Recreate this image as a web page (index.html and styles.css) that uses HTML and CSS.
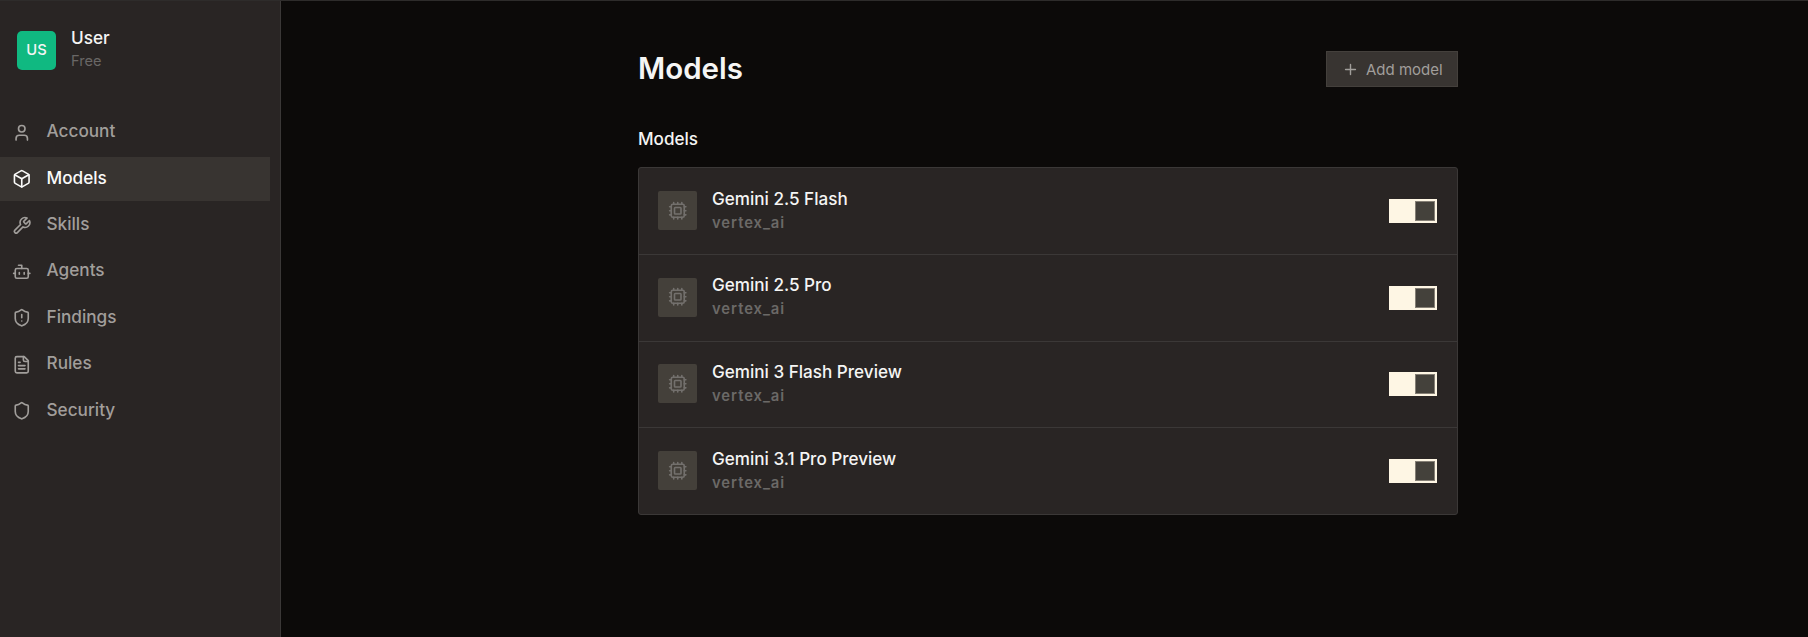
FILE: index.html
```
<!DOCTYPE html>
<html lang="en">
<head>
<meta charset="UTF-8">
<meta name="viewport" content="width=device-width, initial-scale=1.0">
<title>Models</title>
<link rel="stylesheet" href="styles.css">
</head>
<body>

<!-- Shared icon used by every model row -->
<svg class="sprite" width="0" height="0">
    <symbol id="cpu" viewBox="0 0 24 24">
        <rect x="4" y="4" width="16" height="16" rx="2"/>
        <rect x="8" y="8" width="8" height="8" rx="1"/>
        <path d="M12 20v2M12 2v2M17 20v2M17 2v2M2 12h2M2 17h2M2 7h2M20 12h2M20 17h2M20 7h2M7 20v2M7 2v2"/>
    </symbol>
</svg>

<div class="app">
    <aside class="sidebar">
        <div class="profile">
            <div class="avatar">US</div>
            <div class="profile-text">
                <div class="profile-name">User</div>
                <div class="profile-plan">Free</div>
            </div>
        </div>

        <nav class="nav">
            <a class="nav-item">
                <svg class="icon" viewBox="0 0 24 24"><path d="M19 21v-2a4 4 0 0 0-4-4H9a4 4 0 0 0-4 4v2"/><circle cx="12" cy="7" r="4"/></svg>
                <span>Account</span>
            </a>
            <a class="nav-item active">
                <svg class="icon" viewBox="0 0 24 24"><path d="M21 8a2 2 0 0 0-1-1.73l-7-4a2 2 0 0 0-2 0l-7 4A2 2 0 0 0 3 8v8a2 2 0 0 0 1 1.73l7 4a2 2 0 0 0 2 0l7-4A2 2 0 0 0 21 16Z"/><path d="m3.3 7 8.7 5 8.7-5"/><path d="M12 22V12"/></svg>
                <span>Models</span>
            </a>
            <a class="nav-item">
                <svg class="icon" viewBox="0 0 24 24"><path d="M14.7 6.3a1 1 0 0 0 0 1.4l1.6 1.6a1 1 0 0 0 1.4 0l3.77-3.77a6 6 0 0 1-7.94 7.94l-6.91 6.91a2.12 2.12 0 0 1-3-3l6.91-6.91a6 6 0 0 1 7.94-7.94l-3.76 3.76z"/></svg>
                <span>Skills</span>
            </a>
            <a class="nav-item">
                <svg class="icon" viewBox="0 0 24 24"><path d="M12 8V4H8"/><rect x="4" y="8" width="16" height="12" rx="2"/><path d="M2 14h2M20 14h2M15 13v2M9 13v2"/></svg>
                <span>Agents</span>
            </a>
            <a class="nav-item">
                <svg class="icon" viewBox="0 0 24 24"><path d="M20 13c0 5-3.5 7.5-7.66 8.95a1 1 0 0 1-.67-.01C7.5 20.5 4 18 4 13V6a1 1 0 0 1 1-1c2 0 4.5-1.2 6.24-2.72a1.17 1.17 0 0 1 1.52 0C14.51 3.81 17 5 19 5a1 1 0 0 1 1 1z"/><path d="M12 8v4M12 16h.01"/></svg>
                <span>Findings</span>
            </a>
            <a class="nav-item">
                <svg class="icon" viewBox="0 0 24 24"><path d="M15 2H6a2 2 0 0 0-2 2v16a2 2 0 0 0 2 2h12a2 2 0 0 0 2-2V7Z"/><path d="M14 2v4a2 2 0 0 0 2 2h4M10 9H8M16 13H8M16 17H8"/></svg>
                <span>Rules</span>
            </a>
            <a class="nav-item">
                <svg class="icon" viewBox="0 0 24 24"><path d="M20 13c0 5-3.5 7.5-7.66 8.95a1 1 0 0 1-.67-.01C7.5 20.5 4 18 4 13V6a1 1 0 0 1 1-1c2 0 4.5-1.2 6.24-2.72a1.17 1.17 0 0 1 1.52 0C14.51 3.81 17 5 19 5a1 1 0 0 1 1 1z"/></svg>
                <span>Security</span>
            </a>
        </nav>
    </aside>

    <main class="main">
        <div class="content">
            <div class="header">
                <h1>Models</h1>
                <button class="add-button">
                    <svg class="plus" viewBox="0 0 24 24"><path d="M5 12h14M12 5v14"/></svg>
                    <span>Add model</span>
                </button>
            </div>

            <h2>Models</h2>

            <div class="card">
                <div class="row">
                    <div class="model-icon"><svg class="icon"><use href="#cpu"/></svg></div>
                    <div class="model-text">
                        <div class="model-name">Gemini 2.5 Flash</div>
                        <div class="provider">vertex_ai</div>
                    </div>
                    <div class="toggle"><div class="knob"></div></div>
                </div>
                <div class="row">
                    <div class="model-icon"><svg class="icon"><use href="#cpu"/></svg></div>
                    <div class="model-text">
                        <div class="model-name">Gemini 2.5 Pro</div>
                        <div class="provider">vertex_ai</div>
                    </div>
                    <div class="toggle"><div class="knob"></div></div>
                </div>
                <div class="row">
                    <div class="model-icon"><svg class="icon"><use href="#cpu"/></svg></div>
                    <div class="model-text">
                        <div class="model-name">Gemini 3 Flash Preview</div>
                        <div class="provider">vertex_ai</div>
                    </div>
                    <div class="toggle"><div class="knob"></div></div>
                </div>
                <div class="row">
                    <div class="model-icon"><svg class="icon"><use href="#cpu"/></svg></div>
                    <div class="model-text">
                        <div class="model-name">Gemini 3.1 Pro Preview</div>
                        <div class="provider">vertex_ai</div>
                    </div>
                    <div class="toggle"><div class="knob"></div></div>
                </div>
            </div>
        </div>
    </main>
</div>

</body>
</html>
```
FILE: styles.css
```
* {
    box-sizing: border-box;
}

body {
    margin: 0;
    font-family: Inter, sans-serif;
    background-color: #0c0a09;
    color: #f5f5f4;
}

.sprite {
    display: none;
}

.app {
    display: flex;
    height: 100vh;
    border-top: 1px solid #2e2c2b;
}

.icon,
.plus {
    width: 19.5px;
    height: 19.5px;
    fill: none;
    stroke: currentColor;
    stroke-width: 2;
    stroke-linecap: round;
    stroke-linejoin: round;
    flex-shrink: 0;
}

.sidebar {
    width: 281px;
    flex-shrink: 0;
    background-color: #292524;
    border-right: 1px solid #3b3837;
}

.profile {
    display: flex;
    align-items: flex-start;
    gap: 15px;
    padding: 25px 17px 0;
    height: 74px;
}

.avatar {
    width: 39px;
    height: 39px;
    margin-top: 5px;
    border-radius: 5px;
    background-color: #10b981;
    display: flex;
    align-items: center;
    justify-content: center;
    padding-bottom: 2px;
    font-size: 14.7px;
    font-weight: 500;
}

.profile-name {
    font-size: 17.2px;
    line-height: 24px;
    font-weight: 500;
}

.profile-plan {
    font-size: 14.6px;
    line-height: 22px;
    color: #696766;
}

.nav {
    display: flex;
    flex-direction: column;
    gap: 2.4px;
    padding: 35.5px 10px 0 0;
}

.nav-item {
    display: flex;
    align-items: center;
    gap: 15px;
    height: 44px;
    padding: 0 12px;
    color: #a19e9b;
    font-size: 17.2px;
    font-weight: 500;
}

.nav-item span {
    padding-bottom: 3.5px;
}

.nav-item.active {
    background-color: #383431;
    color: #fafaf9;
}

.nav-item.active span {
    padding-bottom: 2.5px;
}

.main {
    flex: 1;
    display: flex;
    justify-content: center;
}

.content {
    width: 820px;
    margin-left: 7px;
    padding-top: 50px;
}

.header {
    display: flex;
    align-items: center;
    justify-content: space-between;
    height: 36px;
}

h1 {
    margin: 0;
    padding-bottom: 2px;
    font-size: 29.5px;
    font-weight: 600;
}

.add-button {
    display: flex;
    align-items: center;
    gap: 7px;
    width: 132px;
    height: 36px;
    padding: 0 0 0 15px;
    border: 1px solid #44403c;
    background-color: #383431;
    color: #a19e9b;
    font-family: inherit;
    font-size: 15px;
    font-weight: 400;
}

.plus {
    width: 17px;
    height: 17px;
}

h2 {
    margin: 40px 0 16px;
    font-size: 17.1px;
    line-height: 24px;
    font-weight: 500;
}

.card {
    border: 1px solid #3b3837;
    border-radius: 3px;
    background-color: #292524;
}

.row {
    display: flex;
    align-items: center;
    height: 86.75px;
    padding: 0 20px 0 19px;
    border-bottom: 1px solid #3b3837;
}

.row:last-child {
    height: 86px;
    border-bottom: none;
}

.model-icon {
    width: 39px;
    height: 39px;
    margin-bottom: 1px;
    border-radius: 2px;
    background-color: #44403a;
    color: #73706d;
    display: flex;
    align-items: center;
    justify-content: center;
}

.model-text {
    flex: 1;
    margin-left: 15px;
}

.model-name {
    font-size: 17.1px;
    line-height: 24px;
    font-weight: 500;
}

.provider {
    font-size: 14.8px;
    line-height: 24.5px;
    font-weight: 600;
    letter-spacing: 0.95px;
    color: #6b6967;
}

.toggle {
    display: flex;
    justify-content: flex-end;
    width: 48.5px;
    height: 24px;
    padding: 2px;
    background-color: #fef6e4;
}

.knob {
    width: 20px;
    height: 20px;
    background-color: #44413b;
    border: 1px solid #857f75;
}
```
